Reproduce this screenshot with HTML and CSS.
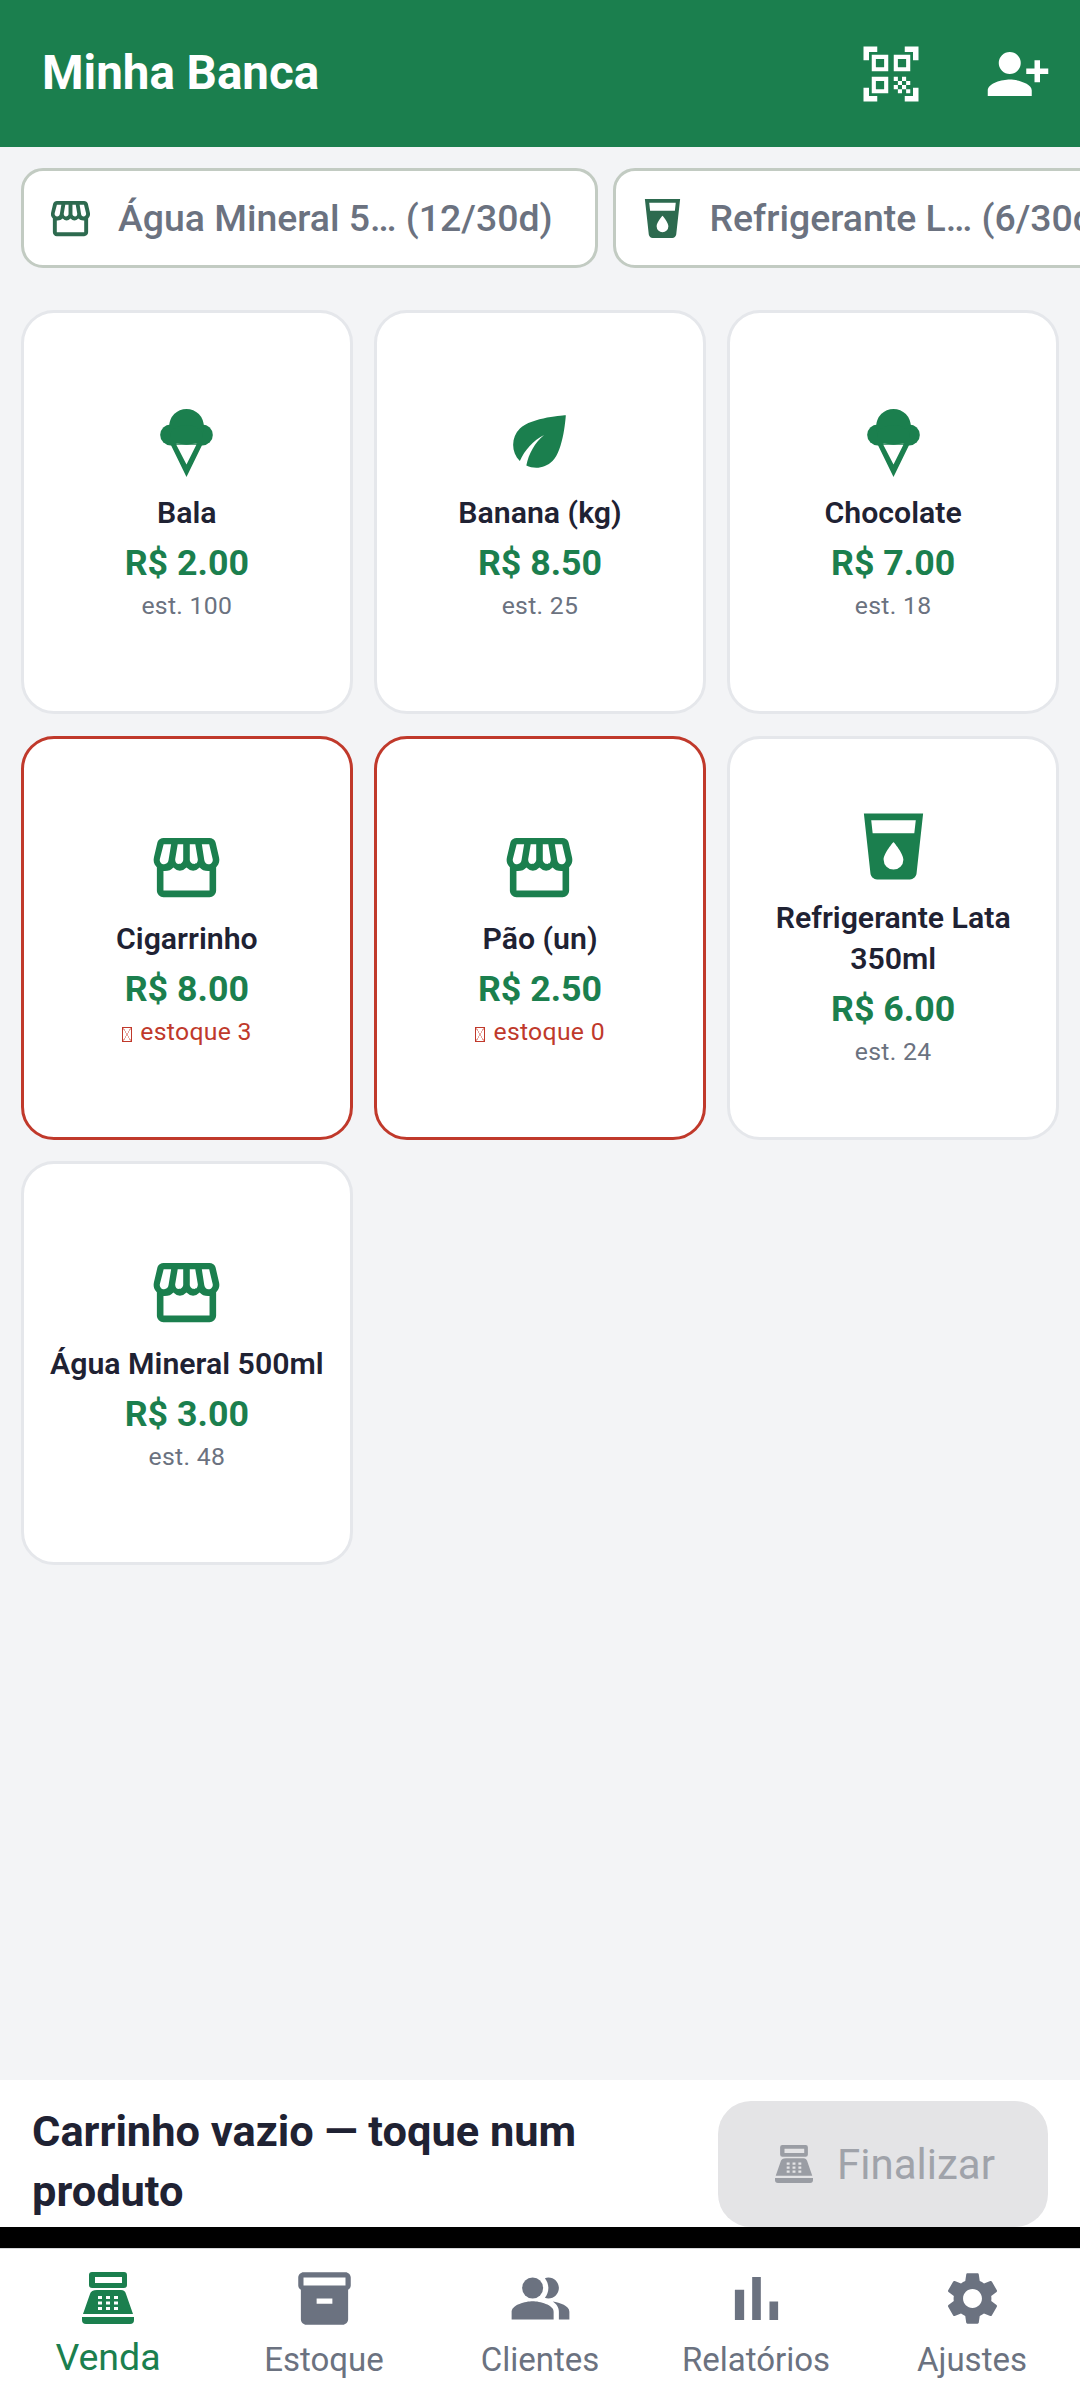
FILE: index.html
```html
<!DOCTYPE html>
<html lang="pt-BR">
<head>
<meta charset="utf-8">
<title>Minha Banca</title>
<link rel="stylesheet" href="styles.css">
</head>
<body>
<svg class="defs" width="0" height="0" aria-hidden="true">
  <defs>
    <symbol id="i-store" viewBox="0 0 24 24"><path fill-rule="evenodd" d="M5.060 3c-.43 0-.84.14-1.220.42-.38.28-.6.64-.7 1.080L2.110 8.910c-.25 1.090-.03 2.020.68 2.810.12.12.2.22.21.23V19c0 .5.2 1 .59 1.410.39.41.89.59 1.410.59h14c.5 0 1-.2 1.410-.59.41-.39.59-.91.59-1.410v-7.050l.2-.23c.71-.79.93-1.720.68-2.810L20.860 4.500c-.1-.44-.32-.8-.7-1.080A2 2 0 0 0 18.940 3H5.060ZM16.660 4.970h2.230l1.060 4.410c.1.43 0 .81-.28 1.150-.26.33-.59.47-1 .47-.34 0-.63-.11-.86-.36-.24-.25-.37-.54-.41-.89l-.74-4.780ZM5.060 4.970h2.270l-.78 4.780c-.12.79-.59 1.250-1.340 1.250-.47 0-.81-.14-1.020-.47-.28-.34-.38-.72-.28-1.150l1.150-4.410ZM9.330 4.970H11v4.700c0 .35-.13.64-.41.89-.25.25-.56.36-.94.36-.34 0-.63-.11-.81-.36-.19-.25-.28-.54-.28-.89V9.500l.77-4.530ZM13 4.970h1.670l.77 4.530v.17c0 .35-.09.64-.28.89-.18.25-.47.36-.81.36-.38 0-.69-.11-.94-.36-.28-.25-.41-.54-.41-.89v-4.700ZM5 13.050Q7 13.200 8 12 10 14 12 12 14 14 16 12 17 13.200 19 13.050V19H5Z"/></symbol>
    <symbol id="i-cup" viewBox="0 0 24 24"><path d="M18.320,8H5.670L5.230,4H18.770M3,2L5,20.230C5.130,21.230 5.970,22 7,22H17C18,22 18.870,21.230 19,20.230L21,2H3M12,19A3,3 0 0,1 9,16C9,14 12,10.600 12,10.600C12,10.600 15,14 15,16A3,3 0 0,1 12,19Z"/></symbol>
    <symbol id="i-eco" viewBox="0 0 24 24"><path d="M6.050 8.050c-2.730 2.730-2.730 7.150-.02 9.880 1.470-3.400 4.090-6.240 7.360-7.930-2.770 2.340-4.710 5.610-5.390 9.320 2.600 1.230 5.800.78 7.950-1.370C19.430 14.470 20 4 20 4S9.530 4.570 6.050 8.050z"/></symbol>
    <symbol id="i-ice" viewBox="0 0 24 24"><path fill-rule="evenodd" d="M7 12.500H17L12 22.800ZM8.900 13 12 19 15 13Z"/><circle cx="7.200" cy="10" r="3.200"/><circle cx="16.800" cy="10" r="3.200"/><ellipse cx="12" cy="7.500" rx="5.300" ry="5.400"/><ellipse cx="12" cy="10" rx="5" ry="2.900"/></symbol>
    <symbol id="i-register" viewBox="0 0 52 52"><path fill-rule="evenodd" d="M10 0H42Q45 0 45 3V13Q45 16 42 16H10Q7 16 7 13V3Q7 0 10 0ZM13 5V11H40V5Z"/><path fill-rule="evenodd" d="M15 18H39Q43 18 44 22L51 42H1L8 22Q9 18 15 18ZM16 24V27H20V24ZM24 24V27H28V24ZM32 24V27H36V24ZM16 29.500V32.500H20V29.500ZM24 29.500V32.500H28V29.500ZM32 29.500V32.500H36V29.500ZM16 35V38H20V35ZM24 35V38H28V35ZM32 35V38H36V35Z"/><path d="M0 45H52V48Q52 52 48 52H4Q0 52 0 48Z"/></symbol>
  </defs>
</svg>

<header class="topbar">
  <h1 class="brand">Minha Banca</h1>
  <div class="top-actions">
    <svg class="top-icon" viewBox="0 0 24 24"><path d="M9.500 6.500v3h-3v-3h3M11 5H5v6h6V5zm-1.500 9.500v3h-3v-3h3M11 13H5v6h6v-6zm6.500-6.500v3h-3v-3h3M19 5h-6v6h6V5zm-6 8h1.500v1.500H13V13zm1.500 1.500H16V16h-1.500v-1.500zM16 13h1.500v1.500H16V13zm-3 3h1.500v1.500H13V16zm1.500 1.500H16V19h-1.500v-1.500zM16 16h1.500v1.500H16V16zm1.500-1.500H19V16h-1.500v-1.500zm0 3H19V19h-1.500v-1.500zM22 7h-2V4h-3V2h5v5zm0 15v-5h-2v3h-3v2h5zM2 22h5v-2H4v-3H2v5zM2 2v5h2V4h3V2H2z"/></svg>
    <svg class="top-icon" viewBox="0 0 24 24"><path d="M9 14C11.670 14 17 15.330 17 18V20H1V18C1 15.330 6.330 14 9 14M18 10V7H20V10H23V12H20V15H18V12H15V10M9 12A4 4 0 0 1 5 8A4 4 0 0 1 9 4A4 4 0 0 1 13 8A4 4 0 0 1 9 12Z"/></svg>
  </div>
</header>

<section class="chips">
  <div class="chip">
    <svg class="chip-icon"><use href="#i-store"/></svg>
    <span>Água Mineral 5… (12/30d)</span>
  </div>
  <div class="chip">
    <svg class="chip-icon"><use href="#i-cup"/></svg>
    <span>Refrigerante L… (6/30d)</span>
  </div>
</section>

<main class="grid">
  <article class="card">
    <svg class="card-icon"><use href="#i-ice"/></svg>
    <div class="name">Bala</div>
    <div class="price">R$ 2.00</div>
    <div class="stock">est. 100</div>
  </article>
  <article class="card">
    <svg class="card-icon"><use href="#i-eco"/></svg>
    <div class="name">Banana (kg)</div>
    <div class="price">R$ 8.50</div>
    <div class="stock">est. 25</div>
  </article>
  <article class="card">
    <svg class="card-icon"><use href="#i-ice"/></svg>
    <div class="name">Chocolate</div>
    <div class="price">R$ 7.00</div>
    <div class="stock">est. 18</div>
  </article>
  <article class="card low">
    <svg class="card-icon"><use href="#i-store"/></svg>
    <div class="name">Cigarrinho</div>
    <div class="price">R$ 8.00</div>
    <div class="stock"><i class="tofu"></i> estoque 3</div>
  </article>
  <article class="card low">
    <svg class="card-icon"><use href="#i-store"/></svg>
    <div class="name">Pão (un)</div>
    <div class="price">R$ 2.50</div>
    <div class="stock"><i class="tofu"></i> estoque 0</div>
  </article>
  <article class="card">
    <svg class="card-icon"><use href="#i-cup"/></svg>
    <div class="name">Refrigerante Lata 350ml</div>
    <div class="price">R$ 6.00</div>
    <div class="stock">est. 24</div>
  </article>
  <article class="card">
    <svg class="card-icon"><use href="#i-store"/></svg>
    <div class="name">Água Mineral 500ml</div>
    <div class="price">R$ 3.00</div>
    <div class="stock">est. 48</div>
  </article>
</main>

<section class="cart">
  <p class="cart-text">Carrinho vazio — toque num produto</p>
  <button class="finish" type="button">
    <svg class="finish-icon"><use href="#i-register"/></svg>
    <span>Finalizar</span>
  </button>
</section>
<div class="band"></div>

<nav class="tabs">
  <a class="tab active">
    <svg class="tab-icon reg"><use href="#i-register"/></svg>
    <span>Venda</span>
  </a>
  <a class="tab">
    <svg class="tab-icon" viewBox="0 0 24 24"><path d="M20 2H4c-1 0-2 .9-2 2v3.010c0 .72.43 1.340 1 1.690V20c0 1.100 1.100 2 2 2h14c.9 0 2-.9 2-2V8.700c.57-.35 1-.97 1-1.690V4c0-1.100-1-2-2-2zm-5 12H9v-2h6v2zm5-7H4V4h16v3z"/></svg>
    <span>Estoque</span>
  </a>
  <a class="tab">
    <svg class="tab-icon" viewBox="0 0 24 24"><path d="M16.670 13.130C18.040 14.060 19 15.320 19 17v3h4v-3C23 14.820 19.430 13.530 16.670 13.130z"/><circle cx="9" cy="8" r="4"/><path d="M15 12c2.210 0 4-1.790 4-4 0-2.210-1.790-4-4-4-.47 0-.91.1-1.330.24C14.500 5.270 15 6.580 15 8s-.5 2.730-1.330 3.760C14.090 11.900 14.530 12 15 12z"/><path d="M9 13c-2.670 0-8 1.340-8 4v3h16v-3C17 14.340 11.670 13 9 13z"/></svg>
    <span>Clientes</span>
  </a>
  <a class="tab">
    <svg class="tab-icon" viewBox="1.800 1.800 20.400 20.400"><path d="M5 9.200h3V19H5zM10.600 5h2.800v14h-2.800zm5.600 8H19v6h-2.800z"/></svg>
    <span>Relatórios</span>
  </a>
  <a class="tab">
    <svg class="tab-icon" viewBox="0 0 24 24"><path d="M19.140 12.940c.04-.3.06-.61.06-.94 0-.32-.02-.64-.07-.94l2.030-1.580c.18-.14.23-.41.12-.61l-1.920-3.320c-.12-.22-.37-.29-.59-.22l-2.390.96c-.5-.38-1.030-.7-1.620-.94l-.36-2.540c-.04-.24-.24-.41-.48-.41h-3.840c-.24 0-.43.17-.47.41l-.36 2.540c-.59.24-1.130.57-1.620.94l-2.390-.96c-.22-.08-.47 0-.59.22L2.740 8.870c-.12.21-.08.47.12.61l2.030 1.580c-.05.3-.09.63-.09.94s.02.64.07.94l-2.030 1.580c-.18.14-.23.41-.12.61l1.920 3.320c.12.22.37.29.59.22l2.390-.96c.5.38 1.030.7 1.620.94l.36 2.540c.05.24.24.41.48.41h3.840c.24 0 .44-.17.47-.41l.36-2.540c.59-.24 1.130-.56 1.620-.94l2.390.96c.22.08.47 0 .59-.22l1.920-3.320c.12-.22.07-.47-.12-.61l-2.010-1.580zM12 15.600c-1.980 0-3.600-1.620-3.600-3.600s1.620-3.600 3.600-3.600 3.600 1.620 3.600 3.600-1.620 3.600-3.600 3.600z"/></svg>
    <span>Ajustes</span>
  </a>
</nav>
</body>
</html>
```

FILE: styles.css
```css
* { box-sizing: border-box; }
html, body { margin: 0; padding: 0; }
body {
  width: 1080px;
  height: 2400px;
  overflow: hidden;
  display: flex;
  flex-direction: column;
  background: #f3f4f6;
  font-family: Roboto, "Noto Sans", sans-serif;
  color: #1f2233;
}
.defs { position: absolute; }

.topbar {
  height: 147px;
  flex: none;
  display: flex;
  align-items: center;
  justify-content: space-between;
  padding: 0 29px 0 42px;
  background: #1b7f4e;
  color: #fff;
}
.brand { margin: 0; font-size: 47.5px; font-weight: 700; line-height: 1; }
.top-actions { display: flex; gap: 61px; }
.top-icon { width: 66px; height: 66px; fill: #fff; display: block; }

.chips {
  flex: none;
  display: flex;
  gap: 15px;
  padding: 21px 0 0 21px;
  overflow: hidden;
}
.chip {
  flex: none;
  height: 100px;
  display: flex;
  align-items: center;
  gap: 24px;
  padding: 0 42px 0 23px;
  background: #fff;
  border: 3px solid #c2cbc2;
  border-radius: 22px;
  font-size: 37.4px;
  font-weight: 500;
  color: #6b7280;
  white-space: nowrap;
}
.chip-icon { width: 47px; height: 47px; fill: #2d6a4f; flex: none; }

.grid {
  flex: 1;
  display: grid;
  grid-template-columns: repeat(3, 1fr);
  grid-auto-rows: 404px;
  gap: 21.5px;
  align-content: start;
  padding: 42px 21px 0;
}
.card {
  display: flex;
  flex-direction: column;
  align-items: center;
  justify-content: center;
  padding: 0 20px;
  background: #fff;
  border: 3px solid #e5e7eb;
  border-radius: 33px;
  text-align: center;
}
.card.low { border-color: #c0392b; }
.card-icon { width: 79px; height: 79px; fill: #1b7f4e; flex: none; margin-bottom: 11px; }
.name { font-size: 30.25px; font-weight: 600; line-height: 41px; color: #1f2233; }
.price { font-size: 35.75px; font-weight: 700; line-height: 49px; color: #1b7f4e; margin-top: 6px; }
.stock { font-size: 24.75px; line-height: 33px; color: #6b7280; letter-spacing: .3px; margin-top: 1px; }
.low .stock { color: #c0392b; }
.tofu {
  display: inline-block;
  width: 10px;
  height: 15px;
  margin-right: 2px;
  vertical-align: -2px;
  border: 1px solid #c0392b;
  background:
    linear-gradient(to top right, transparent 46%, #e8a49c 46%, #e8a49c 54%, transparent 54%),
    linear-gradient(to top left, transparent 46%, #e8a49c 46%, #e8a49c 54%, transparent 54%);
}

.cart {
  flex: none;
  height: 147px;
  display: flex;
  align-items: flex-start;
  justify-content: space-between;
  padding: 22px 32px 0;
  background: #fff;
}
.cart-text { margin: 0; width: 640px; font-size: 43.4px; font-weight: 700; line-height: 60px; color: #1f2233; }
.finish {
  width: 330px;
  height: 126px;
  margin-top: -1px;
  display: flex;
  align-items: center;
  justify-content: center;
  gap: 24px;
  padding-left: 10px;
  border: 0;
  border-radius: 33px;
  background: #e4e4e6;
  color: #a0a3aa;
  font: 400 42px Roboto, sans-serif;
}
.finish-icon { width: 38px; height: 40px; fill: #9a9da4; flex: none; }
.band { flex: none; height: 21px; background: #000; }

.tabs {
  flex: none;
  height: 152px;
  display: flex;
  background: #fff;
  border-top: 1px solid #d6d7da;
}
.tab {
  flex: 1;
  display: flex;
  flex-direction: column;
  align-items: center;
  padding-top: 18px;
  color: #6b7280;
  font-size: 33px;
  line-height: 40px;
}
.tab span { margin-top: 10px; }
.tab-icon { width: 63px; height: 63px; fill: #6b7280; flex: none; display: block; }
.tab.active { color: #1b7f4e; font-size: 37.5px; }
.tab.active span { margin-top: 7px; }
.tab.active .tab-icon { fill: #1b7f4e; }
.tab-icon.reg { width: 52px; height: 52px; margin: 5px 0 6px; }
```
